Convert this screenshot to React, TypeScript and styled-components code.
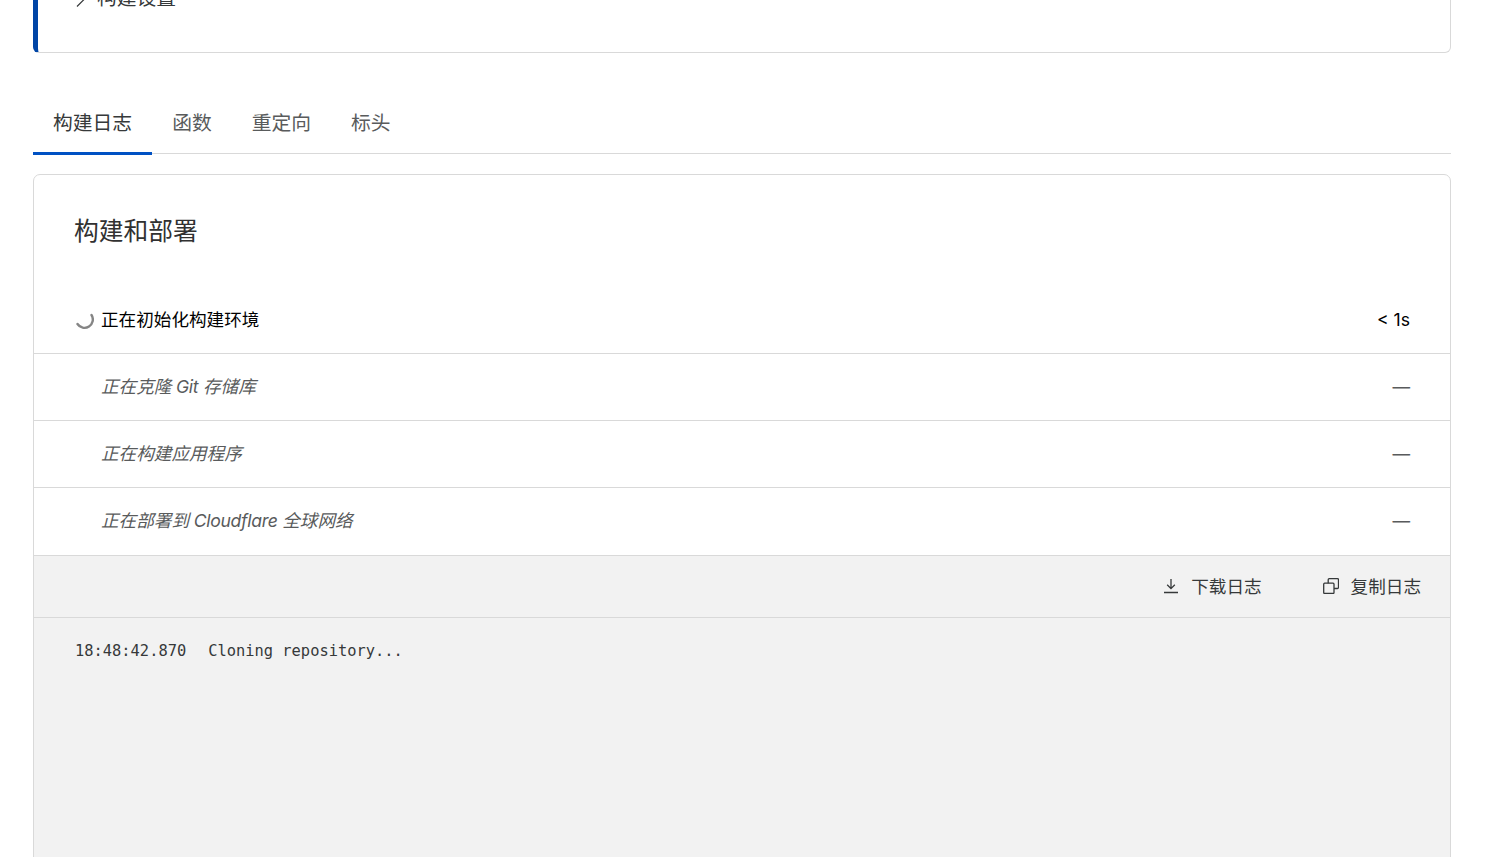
import styled, { createGlobalStyle } from "styled-components";

const GlobalStyle = createGlobalStyle`
  html, body {
    margin: 0;
    padding: 0;
    background: #fff;
    overflow: hidden;
  }
  body {
    font-family: "Inter", "Noto Sans CJK SC", sans-serif;
    color: #36393a;
  }
`;

const Page = styled.div`
  height: 857px;
  overflow: hidden;
  padding: 0 47px 0 33px;
  box-sizing: border-box;
`;

const SettingsCard = styled.div`
  margin-top: -47px;
  height: 100px;
  box-sizing: border-box;
  border: 1px solid #d9d9d9;
  border-left: 5px solid #0045a6;
  border-radius: 6px;
  padding: 31px 0 0 38px;
`;

const SettingsRow = styled.div`
  display: flex;
  align-items: center;
  gap: 9px;
  font-size: 19.8px;
  line-height: 26px;
`;

const Tabs = styled.div`
  display: flex;
  margin-top: 47px;
  height: 53px;
  border-bottom: 1px solid #d9d9d9;
`;

const Tab = styled.div<{ $active?: boolean }>`
  padding: 0 20px;
  font-size: 19.8px;
  line-height: 46px;
  height: 55px;
  box-sizing: border-box;
  color: ${(p) => (p.$active ? "#36393a" : "#595b5c")};
  border-bottom: 3px solid ${(p) => (p.$active ? "#0051c3" : "transparent")};
`;

const BuildCard = styled.div`
  margin-top: 20px;
  border: 1px solid #d9d9d9;
  border-radius: 7px 7px 0 0;
  height: 720px;
`;

const Title = styled.h2`
  margin: 0;
  padding: 37px 40px 0;
  height: 112px;
  box-sizing: border-box;
  font-size: 24.75px;
  line-height: 38px;
  font-weight: 400;
  color: #313131;
`;

const StepList = styled.div`
  display: flex;
  flex-direction: column;
`;

const Step = styled.div<{ $pending?: boolean }>`
  display: flex;
  align-items: center;
  height: 67px;
  box-sizing: border-box;
  padding: 0 40px 2px;
  border-bottom: 1px solid #d9d9d9;
  font-size: 17.6px;
  font-style: ${(p) => (p.$pending ? "italic" : "normal")};
  color: ${(p) => (p.$pending ? "#595b5c" : "#000")};

  &:last-child {
    border-bottom: none;
  }
`;

const StepIcon = styled.span`
  width: 27px;
  flex: none;
  display: flex;
  align-items: center;
`;

const StepName = styled.span`
  flex: 1;
  padding-bottom: 2px;
`;

const Latin = styled.span`
  letter-spacing: -0.3px;
`;

const Duration = styled.span<{ $pending?: boolean }>`
  font-style: normal;
  color: ${(p) => (p.$pending ? "#595b5c" : "#000")};
`;

const LogToolbar = styled.div`
  display: flex;
  justify-content: flex-end;
  align-items: center;
  gap: 61px;
  height: 63px;
  box-sizing: border-box;
  padding: 0 29px 2px 0;
  background: #f2f2f2;
  border-top: 1px solid #d9d9d9;
  border-bottom: 1px solid #d9d9d9;
`;

const LogButton = styled.div`
  display: flex;
  align-items: center;
  gap: 12px;
  font-size: 17.6px;
  color: #36393a;
`;

const LogBody = styled.div`
  background: #f2f2f2;
  height: 300px;
  padding: 22px 41px;
  box-sizing: border-box;
  display: flex;
  gap: 22px;
  font-family: "DejaVu Sans Mono", monospace;
  font-size: 15.4px;
  line-height: 22px;
  color: #36393a;
`;

const SpinnerSvg = styled.svg`
  margin-top: 2px;
`;

const ChevronSvg = styled.svg`
  overflow: visible;
  flex: none;
`;

function Spinner() {
  return (
    <SpinnerSvg width="20" height="20" viewBox="0 0 20 20" fill="none">
      <path d="M17.5 5A8 8 0 0 1 3.5 14" stroke="#858585" strokeWidth="2.4" strokeLinecap="round" />
    </SpinnerSvg>
  );
}

function DownloadIcon() {
  return (
    <svg width="16" height="16" viewBox="0 0 16 16" fill="none" stroke="#36393a" strokeWidth="1.3">
      <path d="M8 1v9.5M4.2 6.8L8 10.6l3.8-3.8M1 14.5h14" />
    </svg>
  );
}

function CopyIcon() {
  return (
    <svg width="16" height="16" viewBox="0 0 16 16" fill="none" stroke="#36393a" strokeWidth="1.3">
      <rect x="0.7" y="5.2" width="10.3" height="10.3" rx="1" />
      <path d="M5.2 5.2V1.7a1 1 0 0 1 1-1h8.3a1 1 0 0 1 1 1v7.8a1 1 0 0 1-1 1H11" />
    </svg>
  );
}

function Chevron() {
  return (
    <ChevronSvg width="12" height="16" viewBox="0 0 12 16" fill="none" stroke="#36393a" strokeWidth="1.2">
      <path d="M1 -1.5L10 7.5L1 16.5" />
    </ChevronSvg>
  );
}

const steps = [
  { before: "正在克隆", latin: " Git ", after: "存储库" },
  { before: "正在构建应用程序", latin: "", after: "" },
  { before: "正在部署到", latin: " Cloudflare ", after: "全球网络" },
];

export default function App() {
  return (
    <Page>
      <GlobalStyle />
      <SettingsCard>
        <SettingsRow>
          <Chevron />
          构建设置
        </SettingsRow>
      </SettingsCard>
      <Tabs>
        <Tab $active>构建日志</Tab>
        <Tab>函数</Tab>
        <Tab>重定向</Tab>
        <Tab>标头</Tab>
      </Tabs>
      <BuildCard>
        <Title>构建和部署</Title>
        <StepList>
          <Step>
            <StepIcon>
              <Spinner />
            </StepIcon>
            <StepName>正在初始化构建环境</StepName>
            <Duration>&lt; 1s</Duration>
          </Step>
          {steps.map((s) => (
            <Step $pending key={s.before}>
              <StepIcon />
              <StepName>
                {s.before}
                <Latin>{s.latin}</Latin>
                {s.after}
              </StepName>
              <Duration $pending>—</Duration>
            </Step>
          ))}
        </StepList>
        <LogToolbar>
          <LogButton>
            <DownloadIcon />
            下载日志
          </LogButton>
          <LogButton>
            <CopyIcon />
            复制日志
          </LogButton>
        </LogToolbar>
        <LogBody>
          <span>18:48:42.870</span>
          <span>Cloning repository...</span>
        </LogBody>
      </BuildCard>
    </Page>
  );
}
